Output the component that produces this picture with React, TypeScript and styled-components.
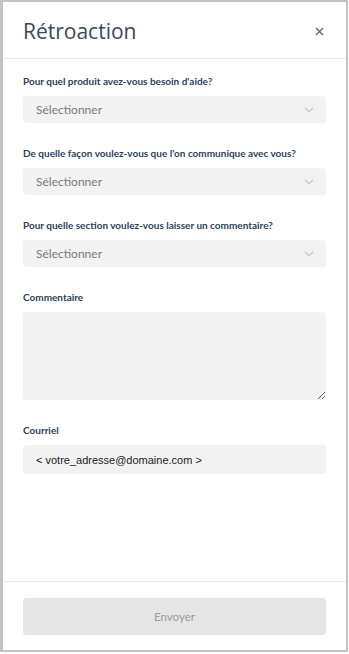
import React from "react";
import styled, { createGlobalStyle } from "styled-components";

const Global = createGlobalStyle`
  html, body { margin: 0; padding: 0; background: #ffffff; }
  * { box-sizing: border-box; }
`;

const Frame = styled.div`
  width: 348px;
  height: 652px;
  border: 2px solid #c3c3c3;
  border-left-width: 3px;
  background: #fff;
  display: flex;
  flex-direction: column;
  font-family: "Lato", "Open Sans", sans-serif;
`;

const Header = styled.header`
  height: 57px;
  flex: none;
  display: flex;
  align-items: center;
  justify-content: space-between;
  padding: 0 20px 0 20px;
  border-bottom: 1px solid #e6e6e6;
`;

const Title = styled.h1`
  margin: 0;
  font-family: "Open Sans", "Noto Sans", sans-serif;
  font-size: 21px;
  font-weight: 500;
  color: #3b4858;
  padding-top: 2px;
`;

const Close = styled.button`
  border: none;
  background: none;
  padding: 0;
  width: 14px;
  height: 14px;
  display: flex;
  align-items: center;
  justify-content: center;
  margin-top: 2px;
`;

const Body = styled.main`
  flex: 1;
  padding: 15px 20px 0 20px;
  display: flex;
  flex-direction: column;
  gap: 23px;
`;

const Field = styled.div`
  display: flex;
  flex-direction: column;
`;

const Label = styled.label`
  font-size: 10px;
  font-weight: 700;
  color: #2d3f5a;
  line-height: 14px;
  margin-bottom: 8px;
`;

const SelectBox = styled.div`
  height: 27px;
  border-radius: 4px;
  background: #f2f2f2;
  display: flex;
  align-items: center;
  justify-content: space-between;
  padding: 0 12px 0 13px;
  font-size: 12px;
  color: #7a7a7a;
`;

const TextArea = styled.textarea`
  height: 88px;
  border: none;
  border-radius: 4px;
  background: #f2f2f2;
  resize: vertical;
  outline: none;
  font-family: inherit;
`;

const EmailBox = styled.div`
  height: 29px;
  border-radius: 4px;
  background: #f2f2f2;
  display: flex;
  align-items: center;
  padding: 0 13px;
  font-family: "Liberation Sans", Arial, sans-serif;
  font-size: 11px;
  color: #222;
`;

const Footer = styled.footer`
  height: 69px;
  flex: none;
  border-top: 1px solid #e6e6e6;
  padding: 16px 20px 0 20px;
`;

const SendButton = styled.button`
  width: 100%;
  height: 37px;
  border: none;
  border-radius: 4px;
  background: #e5e5e5;
  color: #9a9a9a;
  font-family: "Lato", "Open Sans", sans-serif;
  font-size: 11.5px;
`;

const Chevron = () => (
  <svg width="10" height="6" viewBox="0 0 10 6" fill="none">
    <path d="M1 1l4 4 4-4" stroke="#c4c4c4" strokeWidth="1.2" />
  </svg>
);

const Select = () => (
  <SelectBox>
    <span>Sélectionner</span>
    <Chevron />
  </SelectBox>
);

export default function App() {
  return (
    <>
      <Global />
      <Frame>
        <Header>
          <Title>Rétroaction</Title>
          <Close aria-label="Fermer">
            <svg width="9" height="9" viewBox="0 0 9 9">
              <path d="M1 1l7 7M8 1l-7 7" stroke="#6e6e6e" strokeWidth="1.5" />
            </svg>
          </Close>
        </Header>
        <Body>
          <Field>
            <Label>Pour quel produit avez-vous besoin d'aide?</Label>
            <Select />
          </Field>
          <Field>
            <Label>De quelle façon voulez-vous que l'on communique avec vous?</Label>
            <Select />
          </Field>
          <Field>
            <Label>Pour quelle section voulez-vous laisser un commentaire?</Label>
            <Select />
          </Field>
          <Field>
            <Label>Commentaire</Label>
            <TextArea />
          </Field>
          <Field>
            <Label>Courriel</Label>
            <EmailBox>&lt; votre_adresse@domaine.com &gt;</EmailBox>
          </Field>
        </Body>
        <Footer>
          <SendButton>Envoyer</SendButton>
        </Footer>
      </Frame>
    </>
  );
}
